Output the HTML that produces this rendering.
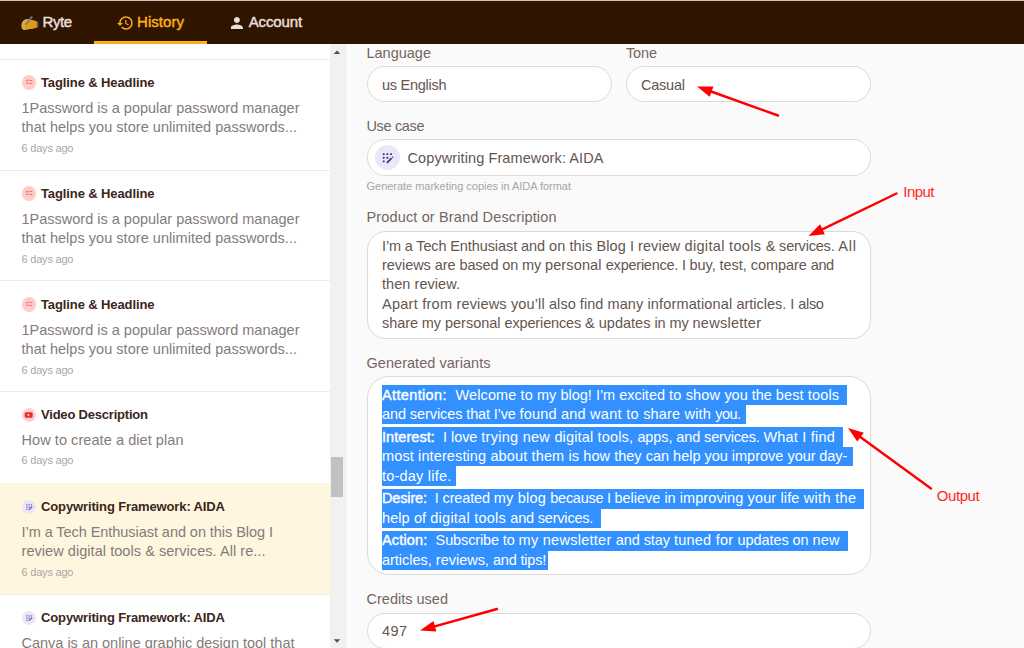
<!DOCTYPE html>
<html lang="en"><head><meta charset="utf-8"><title>Ryte - History</title>
<style>
html,body{margin:0;padding:0}
body{width:1024px;height:648px;overflow:hidden;position:relative;background:#fafafa;font-family:"Liberation Sans",sans-serif}
.t{position:absolute;white-space:pre}
.abs{position:absolute}
.hs{-webkit-text-stroke:0.45px currentColor}
.hl{-webkit-text-stroke:0.4px currentColor}
.hdr{left:0;top:0;width:1024px;height:44px;background:#2f1400;border-top:1px solid #c9c1bb;box-sizing:border-box}
.side{left:0;top:44px;width:330px;height:604px;background:#fff}
.sb{left:330px;top:44px;width:15px;height:604px;background:#f1f1f1;border-right:1px solid #ececec}
.thumb{left:331px;top:457px;width:12px;height:40px;background:#c1c1c1}
.sep{left:0;width:330px;height:1px;background:#efebe8}
.inp{box-sizing:border-box;background:#fff;border:1px solid #e0d9d3;border-radius:18px}
.sel{position:absolute;background:#3390ff}
.ic{position:absolute;border-radius:50%;display:flex;align-items:center;justify-content:center}
.ic svg{display:block}
</style></head><body>
<header>
<div class="abs hdr"></div>
<div class="abs" style="left:94px;top:40.5px;width:112.5px;height:3.5px;background:#fbb116"></div>
<svg class="abs" style="left:0;top:0" width="340" height="44" viewBox="0 0 340 44">
<path d="M21.600 25.200c0-2.600 1.400-4.600 3.600-5.600 1.600-.7 3.200-.6 4.600 0.200 1.200-.3 2.600 0 3.800 0.500l3.400 1.300v6.200l-3.200 0.700c-1.200 0.500-3 0.700-4.400 0.500-0.600 0.500-1.800 0.800-3 0.800-1.400 0.100-3.200-0.100-3.900-0.800-0.900-.9-.9-2.400-.9-3.800z" fill="#dd9b10"/>
<path d="M21.600 25.200c0-2.600 1.400-4.600 3.600-5.600 1.400-.6 2.900-.6 4.100-.1l-3.200 4.700-.5 1.200-.2 4.500c-1.200.1-2.400-.2-2.900-.9-.9-.9-.9-2.400-.9-3.800z" fill="#d9a743"/>
<rect x="36.800" y="21.600" width="1.700" height="6" fill="#5a5560"/>
<path d="M31.600 16.200l0.900 0.700-5.900 7.700-1.100 0.300 0.100-1.200z" fill="#777b8e" stroke="#777b8e" stroke-width="0.700"/>
<g transform="translate(116.200,13.900) scale(0.75)"><path fill="#fbb116" d="M13 3c-4.970 0-9 4.030-9 9H1l3.890 3.890.07.14L9 12H6c0-3.870 3.130-7 7-7s7 3.130 7 7-3.130 7-7 7c-1.930 0-3.680-.79-4.940-2.060l-1.420 1.420C8.270 19.990 10.510 21 13 21c4.970 0 9-4.030 9-9s-4.030-9-9-9zm-1 5v5l4.280 2.540.72-1.210-3.500-2.080V8H12z"/></g>
<g transform="translate(227.900,14.100) scale(0.75)"><path fill="#e9dfd9" d="M12 12c2.210 0 4-1.790 4-4s-1.790-4-4-4-4 1.790-4 4 1.790 4 4 4zm0 2c-2.670 0-8 1.340-8 4v2h16v-2c0-2.660-5.330-4-8-4z"/></g>
</svg>
<nav><span class='t hs' style='left:42.5px;top:11.00px;font-size:15px;line-height:21px;color:#e9dfd9;letter-spacing:-0.448px'>Ryte</span>
<span class='t hs' style='left:137.0px;top:11.00px;font-size:15px;line-height:21px;color:#fbb116;letter-spacing:0.055px'>History</span>
<span class='t hs' style='left:248.7px;top:11.00px;font-size:15px;line-height:21px;color:#e9dfd9;letter-spacing:-0.117px'>Account</span></nav>
</header>
<aside>
<div class="abs side"></div>
<div class="abs" style="left:0;top:483px;width:330px;height:111px;background:#fff6df"></div>
<div class="abs sep" style="top:59px"></div><div class="abs sep" style="top:170px"></div><div class="abs sep" style="top:280px"></div><div class="abs sep" style="top:391px"></div><div class="abs sep" style="top:594px"></div>
<div class="abs sb"></div><div class="abs thumb"></div>
<svg class="abs" style="left:330px;top:44px" width="15" height="604"><path d="M3.700 10l3.300-3.500 3.300 3.500z" fill="#505050"/><path d="M3.700 595.300l3.300 3.500 3.300-3.500z" fill="#505050"/></svg>
<div class="ic" style="left:21.6px;top:75.3px;width:14.4px;height:14.4px;background:#ffcdc9"><svg width="8" height="8" viewBox="0 0 24 24"><path fill="#ff4a4a" d="M22 7h-9v2h9V7zm0 8h-9v2h9v-2zM5.540 11 2 7.460l1.410-1.410 2.120 2.120 4.240-4.240 1.410 1.410L5.540 11zm0 8L2 15.460l1.410-1.410 2.120 2.120 4.240-4.240 1.410 1.410L5.540 19z"/></svg></div><div class="ic" style="left:21.6px;top:186.3px;width:14.4px;height:14.4px;background:#ffcdc9"><svg width="8" height="8" viewBox="0 0 24 24"><path fill="#ff4a4a" d="M22 7h-9v2h9V7zm0 8h-9v2h9v-2zM5.540 11 2 7.460l1.410-1.410 2.120 2.120 4.240-4.240 1.410 1.410L5.540 11zm0 8L2 15.460l1.410-1.410 2.120 2.120 4.240-4.240 1.410 1.410L5.540 19z"/></svg></div><div class="ic" style="left:21.6px;top:297.3px;width:14.4px;height:14.4px;background:#ffcdc9"><svg width="8" height="8" viewBox="0 0 24 24"><path fill="#ff4a4a" d="M22 7h-9v2h9V7zm0 8h-9v2h9v-2zM5.540 11 2 7.460l1.410-1.410 2.120 2.120 4.240-4.240 1.410 1.410L5.540 11zm0 8L2 15.460l1.410-1.410 2.120 2.120 4.240-4.240 1.410 1.410L5.540 19z"/></svg></div><div class="ic" style="left:21.6px;top:407.8px;width:14.4px;height:14.4px;background:#ffd3d3"><svg width="9" height="6" viewBox="0 0 9 6"><rect x="0.700" y="0.200" width="8" height="5.600" rx="1.200" fill="#ee2a2a"/><path d="M3.700 1.800v2.400l2-1.200z" fill="#fff"/></svg></div><div class="ic" style="left:21.7px;top:499.7px;width:14.4px;height:14.4px;background:#ebe5f6"><svg width="7" height="6.500" viewBox="0 0 7 6.500" style="margin:1px 0 0 1px"><rect x="0.3" y="0.3" width="1.2" height="1.2" rx="0.3" fill="#5d57b2"/><rect x="2.5" y="0.3" width="1.2" height="1.2" rx="0.3" fill="#5d57b2"/><rect x="4.7" y="0.3" width="1.2" height="1.2" rx="0.3" fill="#5d57b2"/><rect x="0.3" y="2.5" width="1.2" height="1.2" rx="0.3" fill="#5d57b2"/><rect x="2.5" y="2.5" width="1.2" height="1.2" rx="0.3" fill="#5d57b2"/><rect x="0.3" y="4.7" width="1.2" height="1.2" rx="0.3" fill="#5d57b2"/><path d="M2.800 5.900L6.200 2.500" stroke="#5d57b2" stroke-width="1.200"/></svg></div><div class="ic" style="left:21.7px;top:610.7px;width:14.4px;height:14.4px;background:#ebe5f6"><svg width="7" height="6.500" viewBox="0 0 7 6.500" style="margin:1px 0 0 1px"><rect x="0.3" y="0.3" width="1.2" height="1.2" rx="0.3" fill="#5d57b2"/><rect x="2.5" y="0.3" width="1.2" height="1.2" rx="0.3" fill="#5d57b2"/><rect x="4.7" y="0.3" width="1.2" height="1.2" rx="0.3" fill="#5d57b2"/><rect x="0.3" y="2.5" width="1.2" height="1.2" rx="0.3" fill="#5d57b2"/><rect x="2.5" y="2.5" width="1.2" height="1.2" rx="0.3" fill="#5d57b2"/><rect x="0.3" y="4.7" width="1.2" height="1.2" rx="0.3" fill="#5d57b2"/><path d="M2.800 5.900L6.200 2.500" stroke="#5d57b2" stroke-width="1.200"/></svg></div>
<span class='t' style='left:41.0px;top:73.00px;font-size:13px;line-height:19px;color:#3a261a;letter-spacing:-0.108px;font-weight:700'>Tagline &amp; Headline</span>
<span class='t' style='left:21.5px;top:98.00px;font-size:14.5px;line-height:20px;color:#847c79;letter-spacing:-0.002px'>1Password is a popular password manager</span>
<span class='t' style='left:21.5px;top:117.00px;font-size:14.5px;line-height:20px;color:#847c79;letter-spacing:0.035px'>that helps you store unlimited passwords...</span>
<span class='t' style='left:21.5px;top:140.00px;font-size:11px;line-height:16px;color:#aaa6a3;letter-spacing:-0.203px'>6 days ago</span>
<span class='t' style='left:41.0px;top:184.00px;font-size:13px;line-height:19px;color:#3a261a;letter-spacing:-0.108px;font-weight:700'>Tagline &amp; Headline</span>
<span class='t' style='left:21.5px;top:209.00px;font-size:14.5px;line-height:20px;color:#847c79;letter-spacing:-0.002px'>1Password is a popular password manager</span>
<span class='t' style='left:21.5px;top:228.00px;font-size:14.5px;line-height:20px;color:#847c79;letter-spacing:0.035px'>that helps you store unlimited passwords...</span>
<span class='t' style='left:21.5px;top:251.00px;font-size:11px;line-height:16px;color:#aaa6a3;letter-spacing:-0.203px'>6 days ago</span>
<span class='t' style='left:41.0px;top:295.00px;font-size:13px;line-height:19px;color:#3a261a;letter-spacing:-0.108px;font-weight:700'>Tagline &amp; Headline</span>
<span class='t' style='left:21.5px;top:320.00px;font-size:14.5px;line-height:20px;color:#847c79;letter-spacing:-0.002px'>1Password is a popular password manager</span>
<span class='t' style='left:21.5px;top:339.00px;font-size:14.5px;line-height:20px;color:#847c79;letter-spacing:0.035px'>that helps you store unlimited passwords...</span>
<span class='t' style='left:21.5px;top:362.00px;font-size:11px;line-height:16px;color:#aaa6a3;letter-spacing:-0.203px'>6 days ago</span>
<span class='t' style='left:41.0px;top:405.00px;font-size:13px;line-height:19px;color:#3a261a;letter-spacing:-0.206px;font-weight:700'>Video Description</span>
<span class='t' style='left:21.5px;top:430.00px;font-size:14.5px;line-height:20px;color:#847c79;letter-spacing:0.066px'>How to create a diet plan</span>
<span class='t' style='left:21.5px;top:452.00px;font-size:11px;line-height:16px;color:#aaa6a3;letter-spacing:-0.203px'>6 days ago</span>
<span class='t' style='left:41.0px;top:497.00px;font-size:13px;line-height:19px;color:#3a261a;letter-spacing:-0.128px;font-weight:700'>Copywriting Framework: AIDA</span>
<span class='t' style='left:21.5px;top:522.00px;font-size:14.5px;line-height:20px;color:#847c79;letter-spacing:-0.055px'>I’m a Tech Enthusiast and on this Blog I</span>
<span class='t' style='left:21.5px;top:541.00px;font-size:14.5px;line-height:20px;color:#847c79;letter-spacing:0.054px'>review digital tools &amp; services. All re...</span>
<span class='t' style='left:21.5px;top:564.00px;font-size:11px;line-height:16px;color:#aaa6a3;letter-spacing:-0.203px'>6 days ago</span>
<span class='t' style='left:41.0px;top:608.00px;font-size:13px;line-height:19px;color:#3a261a;letter-spacing:-0.128px;font-weight:700'>Copywriting Framework: AIDA</span>
<span class='t' style='left:21.5px;top:633.00px;font-size:14.5px;line-height:20px;color:#847c79;letter-spacing:-0.006px'>Canva is an online graphic design tool that</span>
<span class='t' style='left:21.5px;top:656.00px;font-size:11px;line-height:16px;color:#aaa6a3;letter-spacing:-0.203px'>6 days ago</span>
</aside>
<main>
<div class="abs inp" style="left:367px;top:66px;width:245px;height:36px"></div>
<div class="abs inp" style="left:626px;top:66px;width:245px;height:36px"></div>
<div class="abs inp" style="left:367px;top:139px;width:504px;height:36.5px"></div>
<div class="abs inp" style="left:367px;top:231px;width:504px;height:107.5px;border-radius:19px"></div>
<div class="abs inp" style="left:367px;top:376px;width:504px;height:199px;border-radius:22px"></div>
<div class="abs inp" style="left:367px;top:612.5px;width:504px;height:36.5px"></div>
<div class="sel" style="left:382px;top:385.0px;width:465px;height:19.7px"></div><div class="sel" style="left:382px;top:404.4px;width:363.5px;height:19.7px"></div><div class="sel" style="left:382px;top:427.2px;width:460.5px;height:19.7px"></div><div class="sel" style="left:382px;top:446.6px;width:470.5px;height:19.7px"></div><div class="sel" style="left:382px;top:466.0px;width:73.5px;height:19.7px"></div><div class="sel" style="left:382px;top:488.9px;width:482px;height:19.7px"></div><div class="sel" style="left:382px;top:508.3px;width:219px;height:19.7px"></div><div class="sel" style="left:382px;top:531.1px;width:465.5px;height:19.7px"></div><div class="sel" style="left:382px;top:550.5px;width:166px;height:19.7px"></div>
<div class="ic" style="left:374.9px;top:145.0px;width:25.2px;height:25.2px;background:#ece6f7"></div>
<span class='t' style='left:366.5px;top:43.00px;font-size:14.5px;line-height:20px;color:#74665e;letter-spacing:-0.002px'>Language</span>
<span class='t' style='left:626.0px;top:43.00px;font-size:14.5px;line-height:20px;color:#74665e;letter-spacing:-0.151px'>Tone</span>
<span class='t' style='left:382.0px;top:75.00px;font-size:14.5px;line-height:20px;color:#65564e;letter-spacing:-0.267px'>us English</span>
<span class='t' style='left:641.0px;top:75.00px;font-size:14.5px;line-height:20px;color:#65564e;letter-spacing:-0.228px'>Casual</span>
<span class='t' style='left:366.5px;top:116.00px;font-size:14.5px;line-height:20px;color:#74665e;letter-spacing:-0.350px'>Use case</span>
<span class='t' style='left:407.5px;top:148.00px;font-size:14.5px;line-height:20px;color:#65564e;letter-spacing:0.100px'>Copywriting Framework: AIDA</span>
<span class='t' style='left:366.5px;top:178.00px;font-size:11px;line-height:16px;color:#a9a4a0;letter-spacing:-0.024px'>Generate marketing copies in AIDA format</span>
<span class='t' style='left:366.5px;top:207.00px;font-size:14.5px;line-height:20px;color:#74665e;letter-spacing:0.142px'>Product or Brand Description</span>
<span class='t' style='left:382.0px;top:236.00px;font-size:14.5px;line-height:20px;color:#65564e;letter-spacing:-0.146px'>I’m a Tech </span>
<span class='t' style='left:450.2px;top:236.00px;font-size:14.5px;line-height:20px;color:#65564e;letter-spacing:-0.081px'>Enthusiast and </span>
<span class='t' style='left:549.0px;top:236.00px;font-size:14.5px;line-height:20px;color:#65564e;letter-spacing:0.094px'>on this </span>
<span class='t' style='left:596.5px;top:236.00px;font-size:14.5px;line-height:20px;color:#65564e;letter-spacing:0.068px'>Blog I review </span>
<span class='t' style='left:684.5px;top:236.00px;font-size:14.5px;line-height:20px;color:#65564e;letter-spacing:0.334px'>digital tools </span>
<span class='t' style='left:765.8px;top:236.00px;font-size:14.5px;line-height:20px;color:#65564e;letter-spacing:-0.203px'>&amp; services. </span>
<span class='t' style='left:838.2px;top:236.00px;font-size:14.5px;line-height:20px;color:#65564e;letter-spacing:0.812px'>All</span>
<span class='t' style='left:382.0px;top:255.00px;font-size:14.5px;line-height:20px;color:#65564e;letter-spacing:-0.056px'>reviews are </span>
<span class='t' style='left:459.5px;top:255.00px;font-size:14.5px;line-height:20px;color:#65564e;letter-spacing:-0.130px'>based on my </span>
<span class='t' style='left:545.0px;top:255.00px;font-size:14.5px;line-height:20px;color:#65564e;letter-spacing:0.122px'>personal </span>
<span class='t' style='left:605.8px;top:255.00px;font-size:14.5px;line-height:20px;color:#65564e;letter-spacing:-0.237px'>experience. I </span>
<span class='t' style='left:689.5px;top:255.00px;font-size:14.5px;line-height:20px;color:#65564e;letter-spacing:-0.050px'>buy, test, </span>
<span class='t' style='left:750.8px;top:255.00px;font-size:14.5px;line-height:20px;color:#65564e;letter-spacing:-0.057px'>compare </span>
<span class='t' style='left:810.8px;top:255.00px;font-size:14.5px;line-height:20px;color:#65564e;letter-spacing:-0.477px'>and</span>
<span class='t' style='left:382.0px;top:274.00px;font-size:14.5px;line-height:20px;color:#65564e;letter-spacing:0.055px'>then review.</span>
<span class='t' style='left:382.0px;top:294.00px;font-size:14.5px;line-height:20px;color:#65564e;letter-spacing:0.253px'>Apart from </span>
<span class='t' style='left:456.5px;top:294.00px;font-size:14.5px;line-height:20px;color:#65564e;letter-spacing:0.150px'>reviews you’ll </span>
<span class='t' style='left:549.0px;top:294.00px;font-size:14.5px;line-height:20px;color:#65564e;letter-spacing:0.045px'>also find </span>
<span class='t' style='left:607.5px;top:294.00px;font-size:14.5px;line-height:20px;color:#65564e;letter-spacing:0.100px'>many </span>
<span class='t' style='left:647.5px;top:294.00px;font-size:14.5px;line-height:20px;color:#65564e;letter-spacing:0.140px'>informational </span>
<span class='t' style='left:736.5px;top:294.00px;font-size:14.5px;line-height:20px;color:#65564e;letter-spacing:-0.025px'>articles. I </span>
<span class='t' style='left:798.2px;top:294.00px;font-size:14.5px;line-height:20px;color:#65564e;letter-spacing:-0.286px'>also</span>
<span class='t' style='left:382.0px;top:313.00px;font-size:14.5px;line-height:20px;color:#65564e;letter-spacing:-0.075px'>share my </span>
<span class='t' style='left:445.0px;top:313.00px;font-size:14.5px;line-height:20px;color:#65564e;letter-spacing:-0.017px'>personal </span>
<span class='t' style='left:504.5px;top:313.00px;font-size:14.5px;line-height:20px;color:#65564e;letter-spacing:-0.143px'>experiences </span>
<span class='t' style='left:585.0px;top:313.00px;font-size:14.5px;line-height:20px;color:#65564e;letter-spacing:0.017px'>&amp; updates </span>
<span class='t' style='left:654.5px;top:313.00px;font-size:14.5px;line-height:20px;color:#65564e;letter-spacing:-0.112px'>in my </span>
<span class='t' style='left:692.5px;top:313.00px;font-size:14.5px;line-height:20px;color:#65564e;letter-spacing:0.267px'>newsletter</span>
<span class='t' style='left:366.5px;top:353.00px;font-size:14.5px;line-height:20px;color:#74665e;letter-spacing:0.040px'>Generated variants</span>
<span class='t' style='left:366.5px;top:589.00px;font-size:14.5px;line-height:20px;color:#74665e;letter-spacing:0.009px'>Credits used</span>
<span class='t' style='left:382.0px;top:621.00px;font-size:14.5px;line-height:20px;color:#65564e;letter-spacing:0.398px'>497</span>
<span class='t' style='left:903.3px;top:181.00px;font-size:15px;line-height:21px;color:#ff2626;letter-spacing:-0.544px'>Input</span>
<span class='t' style='left:936.8px;top:485.00px;font-size:15px;line-height:21px;color:#ff2626;letter-spacing:-0.446px'>Output</span>
<span class='t hl' style='left:382.0px;top:385.00px;font-size:14.5px;line-height:20px;color:#fff;letter-spacing:0.359px'>Attention:</span>
<span class='t' style='left:455.5px;top:385.00px;font-size:14.5px;line-height:20px;color:#fff;letter-spacing:0.107px'>Welcome to </span>
<span class='t' style='left:537.0px;top:385.00px;font-size:14.5px;line-height:20px;color:#fff;letter-spacing:0.006px'>my blog! </span>
<span class='t' style='left:595.9px;top:385.00px;font-size:14.5px;line-height:20px;color:#fff;letter-spacing:-0.020px'>I’m excited </span>
<span class='t' style='left:669.0px;top:385.00px;font-size:14.5px;line-height:20px;color:#fff;letter-spacing:0.175px'>to show </span>
<span class='t' style='left:724.4px;top:385.00px;font-size:14.5px;line-height:20px;color:#fff;letter-spacing:-0.024px'>you the </span>
<span class='t' style='left:775.8px;top:385.00px;font-size:14.5px;line-height:20px;color:#fff;letter-spacing:0.125px'>best tools</span>
<span class='t' style='left:382.0px;top:404.00px;font-size:14.5px;line-height:20px;color:#fff;letter-spacing:-0.087px'>and services </span>
<span class='t' style='left:466.3px;top:404.00px;font-size:14.5px;line-height:20px;color:#fff;letter-spacing:-0.161px'>that I’ve </span>
<span class='t' style='left:519.5px;top:404.00px;font-size:14.5px;line-height:20px;color:#fff;letter-spacing:0.205px'>found and </span>
<span class='t' style='left:590.1px;top:404.00px;font-size:14.5px;line-height:20px;color:#fff;letter-spacing:0.290px'>want to </span>
<span class='t' style='left:643.2px;top:404.00px;font-size:14.5px;line-height:20px;color:#fff;letter-spacing:0.170px'>share with </span>
<span class='t' style='left:715.2px;top:404.00px;font-size:14.5px;line-height:20px;color:#fff;letter-spacing:-0.541px'>you.</span>
<span class='t hl' style='left:382.0px;top:427.00px;font-size:14.5px;line-height:20px;color:#fff;letter-spacing:0.051px'>Interest:</span>
<span class='t' style='left:443.1px;top:427.00px;font-size:14.5px;line-height:20px;color:#fff;letter-spacing:-0.070px'>I love </span>
<span class='t' style='left:481.3px;top:427.00px;font-size:14.5px;line-height:20px;color:#fff;letter-spacing:0.270px'>trying new </span>
<span class='t' style='left:554.4px;top:427.00px;font-size:14.5px;line-height:20px;color:#fff;letter-spacing:0.159px'>digital tools, </span>
<span class='t' style='left:637.4px;top:427.00px;font-size:14.5px;line-height:20px;color:#fff;letter-spacing:-0.103px'>apps, and </span>
<span class='t' style='left:704.1px;top:427.00px;font-size:14.5px;line-height:20px;color:#fff;letter-spacing:-0.195px'>services. </span>
<span class='t' style='left:763.4px;top:427.00px;font-size:14.5px;line-height:20px;color:#fff;letter-spacing:0.195px'>What I </span>
<span class='t' style='left:810.7px;top:427.00px;font-size:14.5px;line-height:20px;color:#fff;letter-spacing:0.270px'>find</span>
<span class='t' style='left:382.0px;top:446.00px;font-size:14.5px;line-height:20px;color:#fff;letter-spacing:0.118px'>most interesting </span>
<span class='t' style='left:490.4px;top:446.00px;font-size:14.5px;line-height:20px;color:#fff;letter-spacing:0.138px'>about them </span>
<span class='t' style='left:568.5px;top:446.00px;font-size:14.5px;line-height:20px;color:#fff;letter-spacing:0.080px'>is how </span>
<span class='t' style='left:614.2px;top:446.00px;font-size:14.5px;line-height:20px;color:#fff;letter-spacing:0.006px'>they can </span>
<span class='t' style='left:673.1px;top:446.00px;font-size:14.5px;line-height:20px;color:#fff;letter-spacing:-0.018px'>help you </span>
<span class='t' style='left:731.8px;top:446.00px;font-size:14.5px;line-height:20px;color:#fff;letter-spacing:0.011px'>improve </span>
<span class='t' style='left:787.5px;top:446.00px;font-size:14.5px;line-height:20px;color:#fff;letter-spacing:-0.082px'>your day-</span>
<span class='t' style='left:382.0px;top:466.00px;font-size:14.5px;line-height:20px;color:#fff;letter-spacing:0.209px'>to-day life.</span>
<span class='t hl' style='left:382.0px;top:488.00px;font-size:14.5px;line-height:20px;color:#fff;letter-spacing:-0.156px'>Desire:</span>
<span class='t' style='left:434.8px;top:488.00px;font-size:14.5px;line-height:20px;color:#fff;letter-spacing:-0.155px'>I created </span>
<span class='t' style='left:493.7px;top:488.00px;font-size:14.5px;line-height:20px;color:#fff;letter-spacing:0.223px'>my blog </span>
<span class='t' style='left:550.3px;top:488.00px;font-size:14.5px;line-height:20px;color:#fff;letter-spacing:-0.272px'>because I </span>
<span class='t' style='left:614.5px;top:488.00px;font-size:14.5px;line-height:20px;color:#fff;letter-spacing:-0.009px'>believe in </span>
<span class='t' style='left:679.7px;top:488.00px;font-size:14.5px;line-height:20px;color:#fff;letter-spacing:0.101px'>improving </span>
<span class='t' style='left:747.6px;top:488.00px;font-size:14.5px;line-height:20px;color:#fff;letter-spacing:0.129px'>your life </span>
<span class='t' style='left:803.7px;top:488.00px;font-size:14.5px;line-height:20px;color:#fff;letter-spacing:0.331px'>with the</span>
<span class='t' style='left:382.0px;top:508.00px;font-size:14.5px;line-height:20px;color:#fff;letter-spacing:0.090px'>help of </span>
<span class='t' style='left:430.3px;top:508.00px;font-size:14.5px;line-height:20px;color:#fff;letter-spacing:0.244px'>digital tools </span>
<span class='t' style='left:510.3px;top:508.00px;font-size:14.5px;line-height:20px;color:#fff;letter-spacing:-0.195px'>and services.</span>
<span class='t hl' style='left:382.0px;top:530.00px;font-size:14.5px;line-height:20px;color:#fff;letter-spacing:0.159px'>Action:</span>
<span class='t' style='left:435.6px;top:530.00px;font-size:14.5px;line-height:20px;color:#fff;letter-spacing:-0.126px'>Subscribe to </span>
<span class='t' style='left:518.6px;top:530.00px;font-size:14.5px;line-height:20px;color:#fff;letter-spacing:0.265px'>my newsletter </span>
<span class='t' style='left:615.8px;top:530.00px;font-size:14.5px;line-height:20px;color:#fff;letter-spacing:-0.083px'>and stay </span>
<span class='t' style='left:673.9px;top:530.00px;font-size:14.5px;line-height:20px;color:#fff;letter-spacing:0.243px'>tuned for </span>
<span class='t' style='left:737.6px;top:530.00px;font-size:14.5px;line-height:20px;color:#fff;letter-spacing:-0.091px'>updates on </span>
<span class='t' style='left:812.4px;top:530.00px;font-size:14.5px;line-height:20px;color:#fff;letter-spacing:0.195px'>new</span>
<span class='t' style='left:382.0px;top:550.00px;font-size:14.5px;line-height:20px;color:#fff;letter-spacing:-0.016px'>articles, reviews, </span>
<span class='t' style='left:492.9px;top:550.00px;font-size:14.5px;line-height:20px;color:#fff;letter-spacing:-0.179px'>and tips!</span>
<svg class="abs" style="left:0;top:0" width="1024" height="648"><rect x="382.75" y="153.15" width="1.9" height="1.9" rx="0.55" fill="#34327f"/><rect x="386.45" y="153.15" width="1.9" height="1.9" rx="0.55" fill="#34327f"/><rect x="390.05" y="153.15" width="1.9" height="1.9" rx="0.55" fill="#34327f"/><rect x="382.75" y="156.75" width="1.9" height="1.9" rx="0.55" fill="#34327f"/><rect x="386.45" y="156.75" width="1.9" height="1.9" rx="0.55" fill="#34327f"/><rect x="382.75" y="160.45" width="1.9" height="1.9" rx="0.55" fill="#34327f"/><path d="M386.500 163.300l0.100-1.300 4.400-4.400 1.200 1.200-4.400 4.400z" fill="#34327f"/><path d="M391.700 156.900l0.700-0.700 1.200 1.200-0.700 0.700z" fill="#34327f"/><line x1="778.0" y1="115.5" x2="709.7" y2="91.0" stroke="#ff0000" stroke-width="2.4" stroke-linecap="round"/><polygon points="697.0,86.4 713.4,86.5 709.7,96.8" fill="#ff0000"/><line x1="896.5" y1="193.5" x2="820.7" y2="230.1" stroke="#ff0000" stroke-width="2.4" stroke-linecap="round"/><polygon points="808.5,236.0 820.1,224.3 824.8,234.2" fill="#ff0000"/><line x1="931.0" y1="488.5" x2="858.9" y2="436.0" stroke="#ff0000" stroke-width="2.4" stroke-linecap="round"/><polygon points="848.0,428.0 863.8,432.7 857.3,441.6" fill="#ff0000"/><line x1="497.0" y1="609.0" x2="433.0" y2="626.9" stroke="#ff0000" stroke-width="2.4" stroke-linecap="round"/><polygon points="420.0,630.5 433.4,621.0 436.4,631.6" fill="#ff0000"/></svg>
</main>
</body></html>
